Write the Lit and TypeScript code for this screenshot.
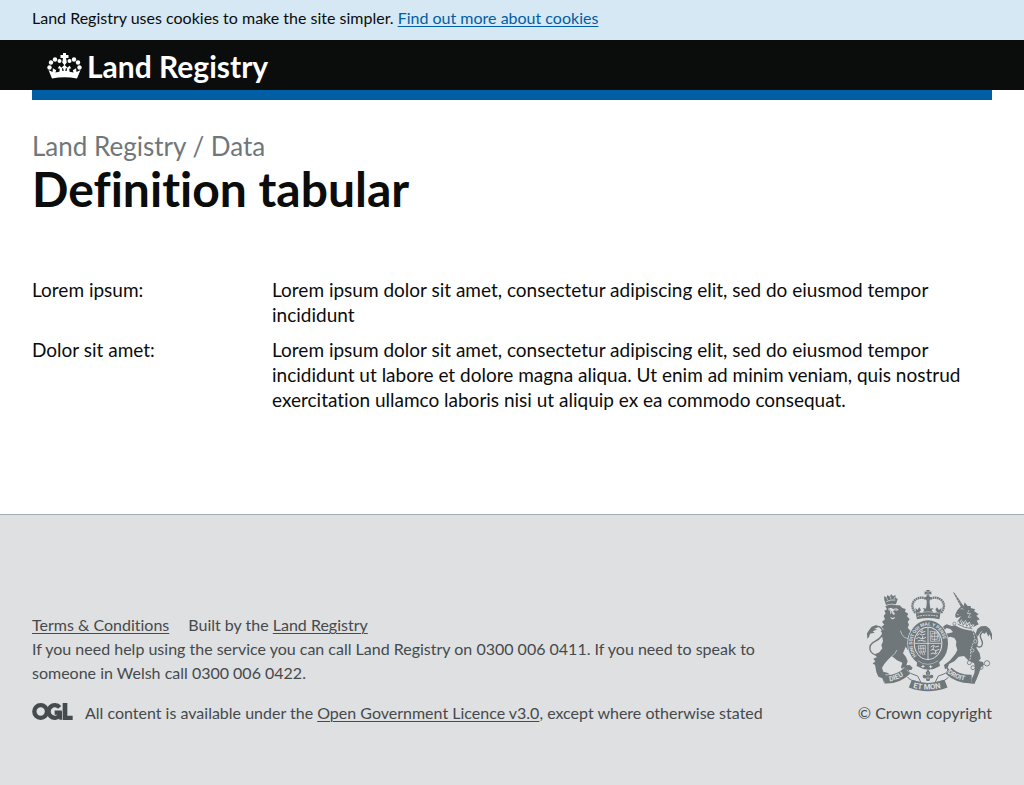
import { LitElement, html, css, svg } from "lit";
import { customElement } from "lit/decorators.js";

const crown = svg`
  <g fill="#fff">
    <circle cx="2.500" cy="14.500" r="2.200"/><circle cx="4" cy="9.500" r="2.200"/><circle cx="8" cy="6.500" r="2.200"/><circle cx="12.500" cy="8" r="2"/>
    <circle cx="32.500" cy="14.500" r="2.200"/><circle cx="31" cy="9.500" r="2.200"/><circle cx="27" cy="6.500" r="2.200"/><circle cx="22.500" cy="8" r="2"/>
    <path d="M16 0h3v2h2.500v3H19l.8 4.500-2.300 3-2.300-3L16 5h-2.500V2H16z"/>
    <path d="M1.500 17l4 2 .4-3.800 3.300 2-.8 2.300 4-.8.4-3-2-.5 1.600-2.400 2.600 2.300.3 3h1.400l-.4-2.600-1.800-.7 3-3 3 3-1.800.7-.4 2.600h1.400l.3-3 2.600-2.300 1.600 2.400-2 .5.4 3 4 .8-.8-2.300 3.300-2 .4 3.800 4-2-3.500 8.500Q17.500 23 5 25.500z"/>
  </g>`;

const lion = svg`
  <path d="M87 48l8 5 2-8 8 5 3-8 6 7 7-4 1 8 6 4-5 16q-15-5-30 2l-5-15z"/>
  <path d="M94 65q12-7 27-5M94 54l5 5M107 50v6M120 51l-3 5" fill="none" stroke="#dee0e2" stroke-width="2.500"/>
  <path d="M91 79C100 72 115 72 124 76L134 76 142 84 152 87 150 95 160 101 156 109 164 118 158 125 162 134 158 143 164 150 173 158 179 167 172 175 163 171 161 187 168 199 177 210 172 219 160 212 152 200 144 220 153 231 158 244 154 256 164 255 173 263 169 270 144 271 138 262 142 248 126 241 110 228 98 240 88 252 81 263 85 275 99 279 109 287 104 294 86 296 70 290 64 276 60 254 53 251 61 244 55 236 65 232 61 222 73 217 82 205 79 196 84 184 82 172 76 168 84 162 77 154 86 148 79 140 88 134 81 125 90 118 86 108 92 100 88 92 96 88Z"/>
  <path d="M99 86l9-3 6 4 10-2 7 4-6 3-9-1-1 5 6 6-6 2-4-4-6 1 1-7-6-3zM105 111l8 3 8-3-4 6-7 1z" fill="#dee0e2"/>
  <path d="M100 89l6 2M118 90l7-1M110 94v9" fill="none" stroke="#6f777b" stroke-width="2.500"/>
  <path d="M136 152q4 13 12 20 8 4 13 3M112 228q8-6 14-18" fill="none" stroke="#dee0e2" stroke-width="2"/>
  <path d="M76 229q-27-4-31-20-3-16 15-25 26-13 23-31-6-19-23-12-15 6-20 24" fill="none" stroke="#6f777b" stroke-width="4"/>
  <path d="M37 176l-1-16 8-12 6-8 14-5 6 6-13 6 10 1-14 6 6 4-14 3-3 10z"/>`;

const royalCrown = svg`
  <path d="M213 30h12l-3 7 7-3v10l-7-3 2 9q8 2 6 7h-22q-2-5 6-7l2-9-7 3V34l7 3z"/>
  <path d="M218 59q-22-13-39 2-15 16 3 39M221 59q22-13 39 2 15 16-3 39" fill="none" stroke="#6f777b" stroke-width="7" stroke-dasharray="5 1.500"/>
  <path d="M216 58h7l3 29-6 9-7-9z"/>
  <path d="M181 83l6 7 6-8 5 8-5 6 10 2 5-8-5-6 12 2 4-8 5 8 12-2-6 7 6 7 10-2-5-7 5-7 6 8 8-7-6 24q-35-9-70 0z"/>
  <path d="M183 104q36-10 73 0l-3 14q-33-8-67 0z"/>
  <path d="M188 109q31-7 63 0" fill="none" stroke="#dee0e2" stroke-width="3" stroke-dasharray="5 3"/>
  <path d="M185 99q34-8 68 0M219 34v13M213 64v15M226 64v15" fill="none" stroke="#dee0e2" stroke-width="1.500"/>`;

const shield = svg`
  <ellipse cx="219" cy="190" rx="62" ry="71" fill="#dee0e2"/>
  <ellipse cx="219" cy="190" rx="60" ry="69"/>
  <ellipse cx="219" cy="190" rx="43" ry="50" fill="#dee0e2"/>
  <ellipse cx="219" cy="190" rx="40" ry="47"/>
  <g fill="none" stroke="#dee0e2">
    <path d="M219 143v94M179 190h80" stroke-width="2.500"/>
    <path d="M186 167l7-6 8 4 10-3M184 176l7-4 10 5 12-5M194 153l6 5 11-4M188 183l9-2 15 3M202 149l-2 8M204 168l-3 9" stroke-width="2.800"/>
    <path d="M226 153l24 5 4 25-28 1zM231 160h16v18h-16zM239 153v30M227 169h27" stroke-width="2"/>
    <path d="M190 197q-2 17 8 27M197 196q-2 19 8 30M204 196q-1 16 6 29M189 198l22-2v20M190 205h20M193 216h18" stroke-width="2"/>
    <path d="M227 201l8-5 7 5 10-3M227 211l7-3 8 4 11-4M227 222l7-3 7 3 6-4M236 199l-2 9M243 211l-2 9" stroke-width="2.800"/>
  </g>
  <path id="garter" d="M185 228A47 54 0 1 1 253 228" fill="none"/>
  <text class="motto" font-size="14"><textPath href="#garter">HONI SOIT QUI MAL Y PENSE</textPath></text>
  <path d="M187 241q31 24 64 0l4 17q-34 22-70 0z"/>
  <path d="M188 242q30 22 62 0" fill="none" stroke="#dee0e2" stroke-width="1.500"/>
  <path d="M204 253l2 5 5 1-5 2-2 4-2-4-5-2 5-1zM227 254l2 5 5 1-5 2-2 4-2-4-5-2 5-1z" fill="#dee0e2"/>`;

const unicorn = svg`
  <path d="M294 37l5 2 26 38-6 6z"/>
  <path d="M297 45l4 0M302 53l5 0M307 61l5 0M312 69l5 0" fill="none" stroke="#dee0e2" stroke-width="1.500"/>
  <path d="M301 103L307 91 315 82 326 77 329 67 337 77 348 79 347 84 361 88 357 93 371 103 364 107 374 118 365 122 371 133 361 138 350 144Q325 142 306 126L318 109 305 114 301 110Z"/>
  <path d="M317 87l6-1 2 3M306 103l5 1M342 90l-5 11 10-1-8 12 10-1" fill="none" stroke="#dee0e2" stroke-width="1.800"/>
  <path d="M308 120l6 6 5-8 6 9 7-7 5 10 7-5 4 10 10-2-5 13q-25-2-46-15z" fill="#dee0e2"/>
  <path d="M310 121l6 11 3-10 6 14 6-12 4 15 8-9 3 13 9-8M308 132q20 13 44 14" fill="none" stroke="#6f777b" stroke-width="2.500"/>
  <path d="M300 136Q326 152 356 152L366 168 370 186 364 204 374 220 377 236 371 243 384 246 387 254 378 262 371 282 363 301 347 312 336 309 350 297 358 280 360 262 357 250 341 242 327 228 311 230 298 244 282 252 278 264 270 268 267 255 284 242 301 222 307 210 303 196 304 184 298 174 286 170 273 174 269 186 263 187 261 175 271 161 288 158 294 156 286 147 274 144 267 153 263 148 265 139 275 133 290 138Z"/>
  <path d="M359 188q9 18 20 11 7-8-1-23-6-12 5-20 16-8 25 11l3 12" fill="none" stroke="#6f777b" stroke-width="4"/>
  <path d="M368 170l-6-9 5-14 11-8 15-1 11 8 7 16v12l-8-12-3 8-6-14-6 6-9-8-6 8z"/>
  <g fill="none" stroke="#6f777b" stroke-width="2.500">
    <circle cx="396" cy="250" r="8"/><circle cx="378" cy="262" r="6"/><circle cx="343" cy="248" r="6" fill="#dee0e2"/><circle cx="354" cy="263" r="6" fill="#dee0e2"/>
  </g>
  <path d="M352 150q6 14 7 28M354 190q-4 12-8 24 4 12-2 26" fill="none" stroke="#dee0e2" stroke-width="2.500" stroke-dasharray="6 3"/>
  <circle cx="361" cy="184" r="5" fill="#6f777b" stroke="#dee0e2" stroke-width="2"/>
  <circle cx="352" cy="211" r="5" fill="#6f777b" stroke="#dee0e2" stroke-width="2"/>
  <circle cx="298" cy="131" r="4.500" fill="#dee0e2" stroke="#6f777b" stroke-width="2"/>`;

const ribbon = svg`
  <path d="M160 263q-4 14 14 20l14 5 10 20-28-7q-20-9-14-30zM277 263q5 14-13 20l-14 5-10 20 28-7q20-9 14-30z" fill="#dee0e2" stroke="#6f777b" stroke-width="3"/>
  <g fill="none" stroke="#dee0e2" stroke-width="29">
    <path d="M90 298Q128 300 157 272"/><path d="M350 297Q308 298 281 272"/>
  </g>
  <g fill="none" stroke="#6f777b" stroke-width="25">
    <path d="M90 298Q128 300 157 272"/><path d="M350 297Q308 298 281 272"/>
    <path d="M166 311Q219 332 273 311"/>
  </g>
  <path d="M79 286l14-1-5 26zM362 284l7 0-10 27-10 0z"/>
  <path id="dieu" d="M104 304Q134 299 160 276" fill="none"/>
  <path id="mon" d="M174 323Q219 335 270 321" fill="none"/>
  <path id="droit" d="M277 278Q303 302 350 304" fill="none"/>
  <text class="motto" font-size="21"><textPath href="#dieu">DIEU</textPath></text>
  <text class="motto" font-size="23"><textPath href="#mon">ET MON</textPath></text>
  <text class="motto" font-size="20"><textPath href="#droit">DROIT</textPath></text>
  <path d="M219 268l7 10-3 9q12-7 12 3-1 6-9 5l-3 8h-8l-3-8q-8 1-9-5 0-10 12-3l-3-9z"/>
  <path d="M219 276v22M208 295h22" fill="none" stroke="#dee0e2" stroke-width="1.200"/>`;

@customElement("app-root")
export class AppRoot extends LitElement {
  static styles = css`
    :host {
      display: flex;
      flex-direction: column;
      min-height: 100vh;
      font-family: Lato, "Liberation Sans", sans-serif;
      font-size: 19px;
      line-height: 25px;
      font-variant-ligatures: none;
      color: #0b0c0c;
      background: #fff;
    }
    .wrap { margin: 0 32px; }
    .cookies { background: #d5e8f3; padding: 8px 0 12px; font-size: 16px; line-height: 20px; }
    a { color: inherit; text-underline-offset: 2px; text-decoration-thickness: 1px; }
    .cookies a { color: #005ea5; }
    .header { background: #0b0c0c; }
    .brand {
      display: flex; align-items: center; gap: 5px; width: max-content;
      height: 48px; padding: 2px 15px 0;
      color: #fff; font-size: 30px; line-height: 34px; font-weight: 700; text-decoration: none;
    }
    .brand svg { display: block; }
    .stripe { height: 10px; background: #005ea5; }
    main { flex: 1 0 auto; padding-bottom: 102px; }
    h1 { margin: 31px 0 60px; font-size: 48px; line-height: 56px; font-weight: 700; }
    .context { display: block; font-size: 26px; line-height: 30px; font-weight: 400; color: #6f777b; }
    dl { display: grid; grid-template-columns: 1fr 3fr; row-gap: 10px; margin: 0; }
    dd { margin: 0; }
    footer {
      background: #dee0e2; border-top: 1px solid #a1acb2; color: #454a4c;
      font-size: 16px; line-height: 24px; padding: 75px 0 60px;
    }
    .meta { display: flex; align-items: flex-end; gap: 80px; }
    .info { flex: 1; }
    .info p { margin: 0; }
    .links { display: flex; gap: 19px; margin: 0; padding: 0; list-style: none; }
    .info .licence { display: flex; gap: 12px; margin-top: 16px; }
    .ogl { flex: none; margin-top: 2px; }
    .copyright { display: flex; flex-direction: column; align-items: flex-end; gap: 9px; text-decoration: none; white-space: nowrap; }
    .copyright svg { display: block; }
    .motto { font-family: Roboto, sans-serif; font-weight: 700; fill: #dee0e2; }
  `;

  render() {
    return html`
      <div class="cookies">
        <div class="wrap">Land Registry uses cookies to make the site simpler. <a href="#cookies">Find out more about cookies</a></div>
      </div>
      <header class="header">
        <div class="wrap">
          <a class="brand" href="#home">
            <svg width="35" height="26" viewBox="0 0 35 26" aria-hidden="true">${crown}</svg>
            <span>Land Registry</span>
          </a>
        </div>
      </header>
      <div class="wrap stripe"></div>
      <main class="wrap">
        <h1><span class="context">Land Registry / Data</span>Definition tabular</h1>
        <dl>
          <dt>Lorem ipsum:</dt>
          <dd>Lorem ipsum dolor sit amet, consectetur adipiscing elit, sed do eiusmod tempor incididunt</dd>
          <dt>Dolor sit amet:</dt>
          <dd>Lorem ipsum dolor sit amet, consectetur adipiscing elit, sed do eiusmod tempor incididunt ut labore et dolore magna aliqua. Ut enim ad minim veniam, quis nostrud exercitation ullamco laboris nisi ut aliquip ex ea commodo consequat.</dd>
        </dl>
      </main>
      <footer>
        <div class="wrap meta">
          <div class="info">
            <ul class="links">
              <li><a href="#terms">Terms &amp; Conditions</a></li>
              <li>Built by the <a href="#land-registry">Land Registry</a></li>
            </ul>
            <p>If you need help using the service you can call Land Registry on 0300 006 0411. If you need to speak to someone in Welsh call 0300 006 0422.</p>
            <p class="licence">
              <svg class="ogl" width="41" height="17" viewBox="0 0 123 51" role="img" aria-label="OGL">
                <g fill="none" stroke="#454a4c" stroke-width="13">
                  <circle cx="26" cy="25.500" r="19"/>
                  <path d="M83 13A19 19 0 1 0 83 38V29H68"/>
                </g>
                <path d="M92 0h14v38h16v13H92zM80 26h10v24h-8z" fill="#454a4c"/>
              </svg>
              <span>All content is available under the <a href="#licence">Open Government Licence v3.0</a>, except where otherwise stated</span>
            </p>
          </div>
          <a class="copyright" href="#copyright">
            <svg width="125" height="102" viewBox="36 30 375 306" fill="#6f777b" aria-hidden="true">
              ${lion}${unicorn}${royalCrown}${shield}${ribbon}
            </svg>
            <span>© Crown copyright</span>
          </a>
        </div>
      </footer>
    `;
  }
}
